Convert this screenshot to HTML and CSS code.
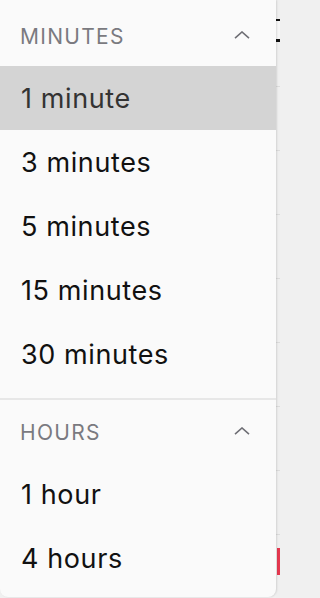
FILE: index.html
```html
<!DOCTYPE html>
<html>
<head>
<meta charset="utf-8">
<link rel="stylesheet" href="styles.css">
</head>
<body>
<div class="page">
  <div class="menu">
    <section class="group group-first">
      <div class="group-head">
        <span class="group-title">MINUTES</span>
        <svg class="chev" width="16" height="8" viewBox="0 0 16 8"><polyline points="1,7.2 8,1 15,7.2" fill="none" stroke="#6e6e74" stroke-width="1.6"/></svg>
      </div>
      <div class="item selected">1 minute</div>
      <div class="item">3 minutes</div>
      <div class="item">5 minutes</div>
      <div class="item">15 minutes</div>
      <div class="item">30 minutes</div>
    </section>
    <section class="group">
      <div class="group-head">
        <span class="group-title">HOURS</span>
        <svg class="chev" width="16" height="8" viewBox="0 0 16 8"><polyline points="1,7.2 8,1 15,7.2" fill="none" stroke="#6e6e74" stroke-width="1.6"/></svg>
      </div>
      <div class="item">1 hour</div>
      <div class="item">4 hours</div>
    </section>
  </div>
  <div class="behind">
    <div class="behind-top">
      <div class="bar-black"></div>
      <div class="bar-gap"></div>
      <div class="bar-black thick"></div>
    </div>
    <div class="behind-row"></div>
    <div class="behind-row"></div>
    <div class="behind-row"></div>
    <div class="behind-row"></div>
    <div class="behind-row"></div>
    <div class="behind-row"></div>
    <div class="behind-row"></div>
    <div class="behind-row last">
      <div class="red-mark"></div>
    </div>
  </div>
</div>
</body>
</html>
```

FILE: styles.css
```css
html, body {
  margin: 0;
  padding: 0;
  background: #f0f0f0;
}
.page {
  display: flex;
  width: 280px;
  height: 598px;
  overflow: hidden;
  font-family: Inter, "Liberation Sans", sans-serif;
}
.menu {
  width: 276px;
  flex: none;
  height: 597px;
  background: #fafafa;
  border-radius: 0 0 8px 8px;
  box-shadow: 1px 0 2px rgba(0, 0, 0, 0.12);
  padding-top: 4px;
  box-sizing: border-box;
  position: relative;
  z-index: 1;
}
.group-first {
  padding-bottom: 12px;
  border-bottom: 2px solid #e7e7e7;
}
.group-head {
  height: 62px;
  display: flex;
  align-items: center;
  justify-content: space-between;
  padding: 0 26px 0 20px;
}
.group-title {
  font-size: 21px;
  letter-spacing: 1.3px;
  color: #7a7a80;
  padding-top: 2px;
}
.chev {
  display: block;
}
.item {
  height: 64px;
  display: flex;
  align-items: center;
  padding-left: 21px;
  font-size: 27px;
  letter-spacing: 0.6px;
  color: #111111;
}
.item.selected {
  background: #d4d4d4;
  color: #333333;
}
.behind {
  flex: 1;
  display: flex;
  flex-direction: column;
  background: #efefef;
}
.behind-top {
  height: 108px;
  padding-top: 19px;
  box-sizing: border-box;
}
.bar-black {
  height: 2px;
  background: #111;
}
.bar-black.thick {
  height: 3px;
}
.bar-gap {
  height: 18px;
  background: #f7f7f7;
}
.behind-row {
  height: 64px;
  flex: none;
  border-top: 1px solid #dcdcdc;
  box-sizing: border-box;
  position: relative;
}
.red-mark {
  position: absolute;
  left: 1px;
  right: 0;
  top: 13px;
  height: 27px;
  background: #e5384f;
}
```
